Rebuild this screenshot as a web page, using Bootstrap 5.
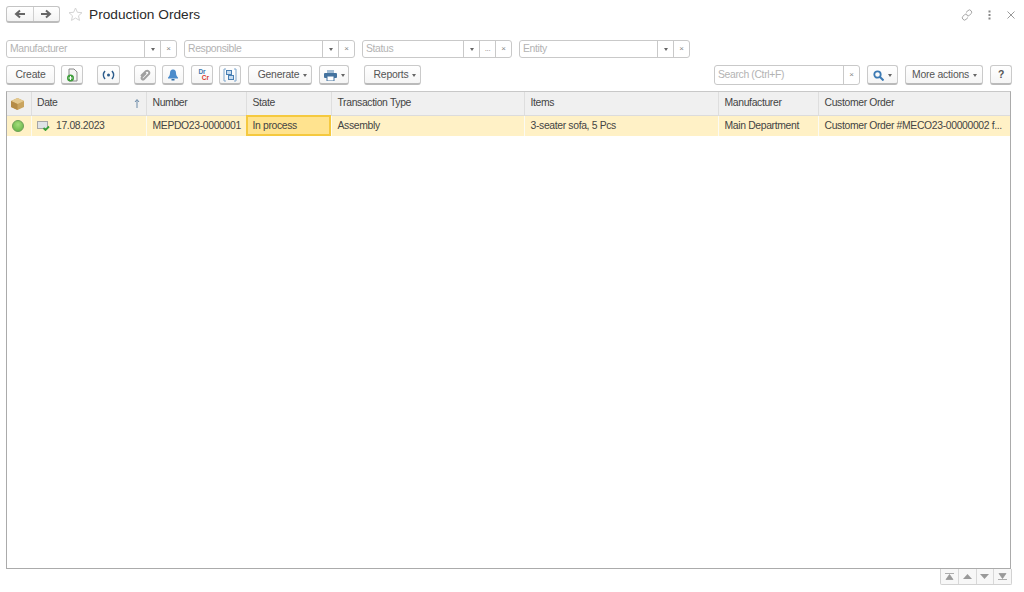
<!DOCTYPE html>
<html lang="en">
<head>
<meta charset="utf-8">
<title>Production Orders</title>
<link href="https://cdn.jsdelivr.net/npm/bootstrap@5.3.0/dist/css/bootstrap.min.css" rel="stylesheet">
<style>
html,body{height:100%;}
body{font-family:"Liberation Sans",Arial,sans-serif;font-size:10.4px;letter-spacing:-.35px;color:#444;background:#fff;overflow:hidden;}
.shell{width:1024px;height:592px;padding:6px 12px 0 6px;}
.headbar{height:17px;margin-bottom:17px;}
.navpair{width:54px;height:17px;border:1px solid #c4c4c4;border-bottom:2px solid #bcbcbc;border-radius:3px;background:linear-gradient(#fff,#f3f3f3);}
.navpair span{flex:1;display:flex;align-items:center;justify-content:center;}
.navpair span+span{border-left:1px solid #cfcfcf;}
.staricon{margin-left:8px;margin-right:6px;}
.pagetitle{font-size:13.7px;letter-spacing:0;color:#2a2a2a;line-height:17px;margin:0;font-weight:400;}
.winicons{margin-right:-4px;gap:15px;}
.fld{height:18px;border:1px solid #c9c9c9;border-radius:3px;background:#fff;margin-right:7px;}
.fldtext{flex:1;color:#b3b3b3;padding-left:3px;line-height:15px;white-space:nowrap;overflow:hidden;}
.fldbtn{width:16px;border-left:1px solid #c9c9c9;display:flex;align-items:center;justify-content:center;color:#888;font-size:8px;line-height:1;}
.tri{width:0;height:0;border-left:2.5px solid transparent;border-right:2.5px solid transparent;border-top:3px solid #666;display:inline-block;}
.w171{width:171px;}.w150{width:150px;}
.filters{height:18px;margin-bottom:7px;}
.tools{height:20px;margin-bottom:6px;}
.tbtn{height:20px;border:1px solid #cacaca;border-bottom:2px solid #bababa;border-radius:3px;background:linear-gradient(#fff,#f5f5f5);color:#555;display:flex;align-items:center;justify-content:center;gap:4px;line-height:1;white-space:nowrap;padding:1px 0 0;font-size:10.4px;letter-spacing:-.2px;}
.w49{width:49px;}.w22{width:22px;}.w23{width:23px;}.w64{width:64px;padding-left:5px;}.w30{width:30px;}.w57{width:57px;padding-left:5px;}.w31{width:31px;}.w78{width:78px;padding-left:1px;}
.ml6{margin-left:6px;}.ml7{margin-left:7px;}.ml14{margin-left:14px;}.ml15{margin-left:15px;}
.srch{width:146px;height:20px;border-radius:3px;margin-right:0;}
.srch .fldtext{line-height:17px;}
.drcr{display:flex;flex-direction:column;font-size:6.5px;font-weight:700;line-height:6px;width:14px;letter-spacing:0;}
.drtxt{color:#3f78ad;}
.crtxt{color:#d8382c;text-align:right;}
.gridbox{width:1005px;height:478px;border:1px solid #ababab;border-top-color:#c8c8c8;overflow:hidden;}
.ordertable{table-layout:fixed;width:1004px;border-collapse:collapse;font-size:10.4px;color:#444;}
.ordertable th{height:23px;background:#f0f0f0;font-weight:400;padding:0 6px;border-right:1px solid #dedede;border-bottom:1px solid #dcdcdc;white-space:nowrap;vertical-align:middle;color:#444;}
.ordertable td{height:21px;background:#fff1c6;padding:0 6px;border-right:1px solid #fbfaf2;white-space:nowrap;overflow:hidden;vertical-align:middle;}
.ordertable th:last-child,.ordertable td:last-child{border-right:0;}
.ordertable .statecell{background:#ffe38f;outline:2px solid #f5c93f;outline-offset:-2px;}
.ordertable .ic{padding:0 2px 0 0;text-align:center;}
.ordertable .datecol{padding-left:5.5px;}
.dot{display:inline-block;width:12px;height:12px;border-radius:50%;background:radial-gradient(circle at 50% 35%,#a4dc7c,#5fb13e);border:1px solid #6f9f58;vertical-align:middle;}
.thflex{display:flex;justify-content:space-between;align-items:center;}
.datecell{display:flex;align-items:center;gap:6px;}
.pager{height:16px;width:72px;margin-left:auto;border:1px solid #d2d2d2;border-top:0;border-radius:0 0 2px 2px;background:#f7f7f7;}
.pager span{flex:1;display:flex;align-items:center;justify-content:center;}
.pager span+span{border-left:1px solid #d8d8d8;}
</style>
</head>
<body>
<div class="shell">
  <div class="headbar d-flex align-items-center">
    <div class="navpair d-flex">
      <span><svg width="12" height="10" viewBox="0 0 12 10"><path d="M11 5H3M6 1.500 2 5l4 3.500" fill="none" stroke="#666" stroke-width="2"/></svg></span>
      <span><svg width="12" height="10" viewBox="0 0 12 10"><path d="M1 5h8M6 1.500 10 5 6 8.500" fill="none" stroke="#666" stroke-width="2"/></svg></span>
    </div>
    <svg class="staricon" width="15" height="15" viewBox="0 0 15 15"><path d="M7.500 1l1.900 4.300 4.600.4-3.500 3.100 1 4.600-4-2.400-4 2.400 1-4.600L1 5.700l4.600-.4z" fill="#fff" stroke="#d4d4d4"/></svg>
    <h1 class="pagetitle">Production Orders</h1>
    <div class="winicons ms-auto d-flex align-items-center">
      <svg width="12" height="12" viewBox="0 0 12 12"><g fill="none" stroke="#a5a5a5"><path d="M5 3.500 7 1.600a2 2 0 0 1 3 .1 2 2 0 0 1 .1 2.900L8.500 6.300a2 2 0 0 1-2.800 0"/><path d="M7 8.500 5 10.400a2 2 0 0 1-3-.1 2 2 0 0 1-.1-2.900L3.500 5.700a2 2 0 0 1 2.800 0"/></g></svg>
      <svg width="3" height="10" viewBox="0 0 3 10"><g fill="#888"><rect x=".5" y=".5" width="2" height="2"/><rect x=".5" y="4" width="2" height="2"/><rect x=".5" y="7.500" width="2" height="2"/></g></svg>
      <svg width="10" height="10" viewBox="0 0 10 10"><path d="M1.500 1.500l7 7M8.500 1.500l-7 7" stroke="#999" fill="none"/></svg>
    </div>
  </div>

  <div class="filters d-flex">
    <div class="fld w171 d-flex"><div class="fldtext">Manufacturer</div><div class="fldbtn"><i class="tri"></i></div><div class="fldbtn">×</div></div>
    <div class="fld w171 d-flex"><div class="fldtext">Responsible</div><div class="fldbtn"><i class="tri"></i></div><div class="fldbtn">×</div></div>
    <div class="fld w150 d-flex"><div class="fldtext">Status</div><div class="fldbtn"><i class="tri"></i></div><div class="fldbtn">...</div><div class="fldbtn">×</div></div>
    <div class="fld w171 d-flex"><div class="fldtext">Entity</div><div class="fldbtn"><i class="tri"></i></div><div class="fldbtn">×</div></div>
  </div>

  <div class="tools d-flex">
    <button class="tbtn w49">Create</button>
    <button class="tbtn w22 ml6" aria-label="Copy"><svg width="13" height="14" viewBox="0 0 13 14"><path d="M3 1h5l3 3v9H3z" fill="#f4f4f4" stroke="#8a8a8a"/><circle cx="4.500" cy="10" r="3.500" fill="#3f9e3c"/><path d="M2.500 10h4M4.500 8v4" stroke="#fff"/></svg></button>
    <button class="tbtn w23 ml14" aria-label="Signal"><svg width="13" height="10" viewBox="0 0 13 10"><circle cx="6.500" cy="5" r="1.500" fill="#2c5c8c"/><path d="M3 1a6 6 0 0 0 0 8M10 1a6 6 0 0 1 0 8" fill="none" stroke="#2c5c8c" stroke-width="1.600"/></svg></button>
    <button class="tbtn w22 ml14" aria-label="Attach"><svg width="12" height="12" viewBox="0 0 12 12"><path d="M2 7 7 2a2.200 2.200 0 0 1 3 3L5 10a1.300 1.300 0 0 1-2-2l4-4" fill="none" stroke="#a0a0a0" stroke-width="2"/></svg></button>
    <button class="tbtn w22 ml6" aria-label="Reminder"><svg width="12" height="12" viewBox="0 0 12 12"><path d="M6 .5c-2 0-3 1.500-3 3.500 0 2.500-1 3.500-2 4.500v1h10v-1c-1-1-2-2-2-4.500C9 2 8 .5 6 .5z" fill="#4a8bcb"/><rect x="4.500" y="10" width="3" height="1.500" fill="#2f6ba5"/></svg></button>
    <button class="tbtn w22 ml7"><span class="drcr"><span class="drtxt">Dr</span><span class="crtxt">Cr</span></span></button>
    <button class="tbtn w22 ml6" aria-label="Structure"><svg width="14" height="14" viewBox="0 0 14 14"><path d="M3 1H1v12h2M11 1h2v12h-2" fill="none" stroke="#7ea6cc"/><rect x="3.500" y="2.500" width="5" height="4" fill="#c7dcf0" stroke="#4a80b4"/><rect x="5.500" y="7.500" width="5" height="4" fill="#c7dcf0" stroke="#4a80b4"/></svg></button>
    <button class="tbtn w64 ml7">Generate <i class="tri"></i></button>
    <button class="tbtn w30 ml7" aria-label="Print"><svg width="13" height="11" viewBox="0 0 13 11"><path d="M3 0h7v3H3z" fill="#a4bdd4"/><rect y="3" width="13" height="5" rx="1" fill="#44739f"/><rect x="3" y="6" width="7" height="5" fill="#fff" stroke="#44739f"/></svg><i class="tri"></i></button>
    <button class="tbtn w57 ml15">Reports <i class="tri"></i></button>
    <div class="fld srch d-flex ms-auto"><div class="fldtext">Search (Ctrl+F)</div><div class="fldbtn">×</div></div>
    <button class="tbtn w31 ml7" aria-label="Search"><svg width="11" height="11" viewBox="0 0 11 11"><circle cx="4.500" cy="4.500" r="3.200" fill="none" stroke="#3b79b3" stroke-width="1.800"/><path d="M7 7l3.500 3.500" stroke="#3b79b3" stroke-width="2"/></svg><i class="tri"></i></button>
    <button class="tbtn w78 ml7">More actions <i class="tri"></i></button>
    <button class="tbtn w22 ml7"><b>?</b></button>
  </div>

  <div class="gridbox">
    <table class="ordertable">
      <colgroup><col style="width:24px"><col style="width:115px"><col style="width:100px"><col style="width:85px"><col style="width:193px"><col style="width:194px"><col style="width:100px"><col style="width:193px"></colgroup>
      <thead><tr>
        <th class="ic"><svg width="13" height="12" viewBox="0 0 13 12"><path d="M6.500 0 13 3v6l-6.500 3L0 9V3z" fill="#c9a45f"/><path d="M6.500 0 13 3 6.500 6 0 3z" fill="#e4c98f"/><path d="M6.500 6v6L0 9V3z" fill="#b58c46"/></svg></th>
        <th class="datecol"><div class="thflex"><span>Date</span><svg width="6" height="9" viewBox="0 0 6 9"><path d="M3 9V1M1 3l2-2.500L5 3" fill="none" stroke="#6b8aa8"/></svg></div></th>
        <th>Number</th><th>State</th><th>Transaction Type</th><th>Items</th><th>Manufacturer</th><th>Customer Order</th>
      </tr></thead>
      <tbody><tr>
        <td class="ic"><span class="dot"></span></td>
        <td class="datecol"><div class="datecell"><svg width="13" height="11" viewBox="0 0 13 11"><rect x=".5" y="1.500" width="10" height="7" fill="#dfe3e6" stroke="#a5a5a5"/><path d="M6.500 8l2 2 3.500-3.500" fill="none" stroke="#3aa03a" stroke-width="1.800"/></svg><span>17.08.2023</span></div></td>
        <td>MEPDO23-0000001</td>
        <td class="statecell">In process</td>
        <td>Assembly</td>
        <td>3-seater sofa, 5 Pcs</td>
        <td>Main Department</td>
        <td>Customer Order #MECO23-00000002 f...</td>
      </tr></tbody>
    </table>
  </div>
  <div class="pager d-flex">
    <span><svg width="9" height="7" viewBox="0 0 9 7"><path d="M0 .5h9M4.500 1.500 8 6.500H1z" stroke="#999" fill="#999" stroke-width=".8"/></svg></span>
    <span><svg width="9" height="5" viewBox="0 0 9 5"><path d="M4.500 0 9 5H0z" fill="#999"/></svg></span>
    <span><svg width="9" height="5" viewBox="0 0 9 5"><path d="M4.500 5 9 0H0z" fill="#999"/></svg></span>
    <span><svg width="9" height="7" viewBox="0 0 9 7"><path d="M0 6.500h9M4.500 5.500 8 .5H1z" stroke="#999" fill="#999" stroke-width=".8"/></svg></span>
  </div>
</div>
<script src="https://cdn.jsdelivr.net/npm/bootstrap@5.3.0/dist/js/bootstrap.bundle.min.js"></script>
</body>
</html>
